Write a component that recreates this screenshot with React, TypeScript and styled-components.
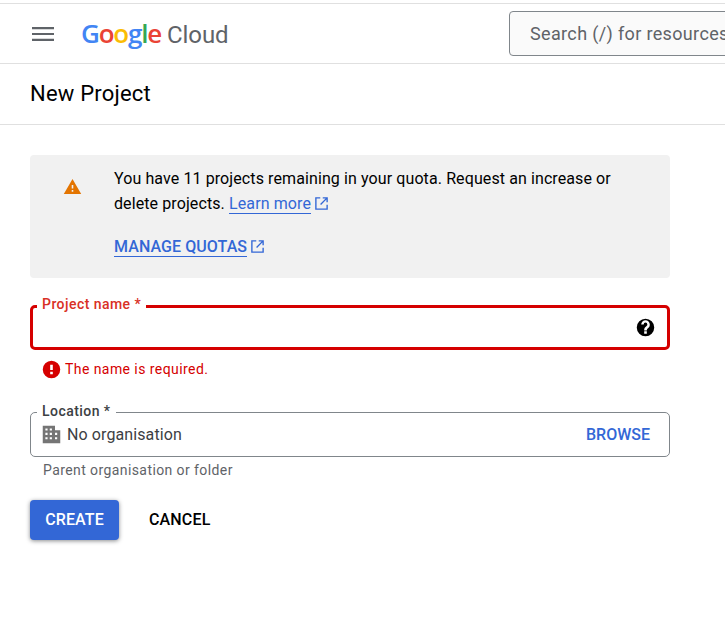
import React from 'react'
import styled, { createGlobalStyle } from 'styled-components'

const GlobalStyle = createGlobalStyle`
  html, body {
    margin: 0;
    padding: 0;
    background: #fff;
    overflow: hidden;
  }
  body {
    font-family: Roboto, "Liberation Sans", sans-serif;
    color: #202124;
  }
`

const BLUE = '#3367d6'
const RED = '#d50000'

const ExternalIcon: React.FC = () => (
  <StyledExternal viewBox="0 0 24 24" fill="none" stroke="currentColor" strokeWidth="2.2">
    <path d="M10 3H3v18h18v-7" />
    <path d="M14 3h7v7M21 3L10.5 13.5" />
  </StyledExternal>
)

const App: React.FC = () => {
  return (
    <>
      <GlobalStyle />
      <StyledPage>
        <StyledTopBar>
          <StyledMenu viewBox="0 0 24 24" fill="#5f6368">
            <path d="M1 5h22v2.2H1zM1 10.9h22v2.2H1zM1 16.8h22V19H1z" />
          </StyledMenu>
          <StyledLogo aria-label="Google Cloud">
            <StyledGoogle>
              <StyledLetter $color="#4285f4">G</StyledLetter>
              <StyledLetter $color="#ea4335">o</StyledLetter>
              <StyledLetter $color="#fbbc05">o</StyledLetter>
              <StyledLetter $color="#4285f4">g</StyledLetter>
              <StyledLetter $color="#34a853">l</StyledLetter>
              <StyledLetter $color="#ea4335">e</StyledLetter>
            </StyledGoogle>
            <StyledCloud>Cloud</StyledCloud>
          </StyledLogo>
          <StyledSearch>Search (/) for resources, docs, products and more</StyledSearch>
        </StyledTopBar>

        <StyledTitleBar>
          <StyledTitle>New Project</StyledTitle>
        </StyledTitleBar>

        <StyledContent>
          <StyledAlert>
            <StyledAlertIcon viewBox="0 0 24 24" fill="#e37400">
              <path d="M1 21.5h22L12 2.5 1 21.5zm12-3h-2v-2h2v2zm0-4h-2v-4.5h2V14.5z" />
            </StyledAlertIcon>
            <StyledAlertBody>
              <StyledAlertText>
                You have 11 projects remaining in your quota. Request an increase or delete projects.{' '}
                <StyledLink href="#">Learn more</StyledLink>
                <ExternalIcon />
              </StyledAlertText>
              <StyledQuotaRow>
                <StyledQuotaLink href="#">MANAGE QUOTAS</StyledQuotaLink>
                <ExternalIcon />
              </StyledQuotaRow>
            </StyledAlertBody>
          </StyledAlert>

          <StyledNameField>
            <StyledFieldLabel $error>Project name *</StyledFieldLabel>
            <StyledHelp viewBox="0 0 24 24" fill="#000">
              <path d="M12 2a10 10 0 1 0 0 20 10 10 0 0 0 0-20zm1.5 17h-3v-2.8h3V19zm2.5-7.4l-1.2 1.2c-.9.9-1.3 1.6-1.3 2.7h-3v-.6c0-1.4.6-2.5 1.5-3.4l1.5-1.5c.4-.4.6-.9.6-1.5a2.1 2.1 0 0 0-4.2 0H7.1a4.9 4.9 0 0 1 9.8 0c0 1.1-.2 2.3-.9 3.1z" />
            </StyledHelp>
          </StyledNameField>
          <StyledError>
            <StyledErrorIcon viewBox="0 0 24 24" fill={RED}>
              <path d="M12 2a10 10 0 1 0 0 20 10 10 0 0 0 0-20zm1.5 15.5h-3v-3h3v3zm0-5h-3v-6h3v6z" />
            </StyledErrorIcon>
            The name is required.
          </StyledError>

          <StyledLocationField>
            <StyledFieldLabel>Location *</StyledFieldLabel>
            <StyledBuilding viewBox="0 0 24 24" fill="#757575">
              <path d="M2 2h14v5h6v15H2V2zm3 3v2.5h2.5V5H5zm5 0v2.5h2.5V5H10zM5 10v2.5h2.5V10H5zm5 0v2.5h2.5V10H10zm6 0v2.5h2.5V10H16zM5 15v2.5h2.5V15H5zm5 0v2.5h2.5V15H10zm6 0v2.5h2.5V15H16z" fillRule="evenodd" />
            </StyledBuilding>
            <StyledLocationValue>No organisation</StyledLocationValue>
            <StyledBrowse>BROWSE</StyledBrowse>
          </StyledLocationField>
          <StyledHint>Parent organisation or folder</StyledHint>

          <StyledActions>
            <StyledCreate>CREATE</StyledCreate>
            <StyledCancel>CANCEL</StyledCancel>
          </StyledActions>
        </StyledContent>
      </StyledPage>
    </>
  )
}

const StyledPage = styled.div`
  width: 725px;
  height: 628px;
  overflow: hidden;
  padding-top: 3px;
  box-sizing: border-box;
`

const StyledTopBar = styled.header`
  display: flex;
  align-items: center;
  height: 61px;
  box-sizing: border-box;
  border-top: 1px solid #e0e0e0;
  border-bottom: 1px solid #e0e0e0;
  padding-left: 31px;
`

const StyledMenu = styled.svg`
  width: 24px;
  height: 24px;
  flex: none;
`

const StyledLogo = styled.div`
  display: flex;
  align-items: baseline;
  margin-left: 26px;
  width: 146px;
  flex: none;
  margin-top: -2px;
`

const StyledGoogle = styled.span`
  font-family: "Open Sans", sans-serif;
  font-size: 26px;
  letter-spacing: -1.2px;
  font-weight: 600;
`

const StyledLetter = styled.span<{ $color: string }>`
  color: ${props => props.$color};
`

const StyledCloud = styled.span`
  font-size: 24px;
  letter-spacing: -0.1px;
  color: #5f6368;
  margin-left: 6px;
`

const StyledSearch = styled.div`
  flex: none;
  margin-left: 282px;
  width: 400px;
  height: 45px;
  box-sizing: border-box;
  border: 1px solid #80868b;
  border-radius: 4px;
  background: #fafafa;
  color: #5f6368;
  font-size: 18px;
  letter-spacing: 0.35px;
  line-height: 43px;
  padding-left: 20px;
  white-space: nowrap;
  overflow: hidden;
`

const StyledTitleBar = styled.div`
  height: 61px;
  box-sizing: border-box;
  border-bottom: 1px solid #e0e0e0;
  padding: 0 0 2px 30px;
  display: flex;
  align-items: center;
`

const StyledTitle = styled.h1`
  margin: 0;
  font-size: 22px;
  font-weight: 400;
  letter-spacing: 0.2px;
  color: #000;
`

const StyledContent = styled.main`
  width: 640px;
  margin: 30px 0 0 30px;
`

const StyledAlert = styled.div`
  display: flex;
  height: 123px;
  box-sizing: border-box;
  background: #f1f1f1;
  border-radius: 4px;
  padding: 11px 48px 0 33px;
`

const StyledAlertIcon = styled.svg`
  width: 19px;
  height: 19px;
  flex: none;
  margin-top: 11px;
`

const StyledAlertBody = styled.div`
  margin-left: 32px;
`

const StyledAlertText = styled.div`
  font-size: 16px;
  line-height: 25px;
  letter-spacing: 0.1px;
  color: #000;
`

const StyledLink = styled.a`
  color: ${BLUE};
  text-decoration: none;
  border-bottom: 1px solid ${BLUE};
`

const StyledExternal = styled.svg`
  width: 15px;
  height: 15px;
  margin-left: 3px;
  color: ${BLUE};
  vertical-align: -1.5px;
`

const StyledQuotaRow = styled.div`
  margin-top: 18px;
  line-height: 25px;
  color: ${BLUE};
`

const StyledQuotaLink = styled.a`
  color: ${BLUE};
  font-size: 16px;
  font-weight: 500;
  letter-spacing: 0.08px;
  text-decoration: none;
  border-bottom: 1px solid ${BLUE};
`

const StyledNameField = styled.div`
  position: relative;
  height: 45px;
  box-sizing: border-box;
  margin-top: 27px;
  border: 3px solid ${RED};
  border-radius: 5px;
  display: flex;
  align-items: center;
  justify-content: flex-end;
  padding-right: 11px;
`

const StyledFieldLabel = styled.label<{ $error?: boolean }>`
  position: absolute;
  left: ${props => (props.$error ? '4px' : '6px')};
  top: ${props => (props.$error ? '-13px' : '-11px')};
  padding: 0 5px;
  background: #fff;
  font-size: 14px;
  line-height: 18px;
  font-weight: 500;
  letter-spacing: 0.45px;
  color: ${props => (props.$error ? '#d93025' : '#3c4043')};
`

const StyledHelp = styled.svg`
  width: 21px;
  height: 21px;
`

const StyledError = styled.div`
  display: flex;
  align-items: center;
  margin: 9px 0 0 11px;
  height: 20px;
  font-size: 14px;
  letter-spacing: 0.43px;
  color: ${RED};
`

const StyledErrorIcon = styled.svg`
  width: 21px;
  height: 21px;
  margin-right: 3px;
  flex: none;
`

const StyledLocationField = styled.div`
  position: relative;
  height: 45px;
  box-sizing: border-box;
  margin-top: 33px;
  border: 1px solid #80868b;
  border-radius: 5px;
  display: flex;
  align-items: center;
  padding: 0 19px 0 10px;
`

const StyledBuilding = styled.svg`
  width: 21px;
  height: 21px;
  flex: none;
`

const StyledLocationValue = styled.span`
  margin-left: 5px;
  flex: 1;
  font-size: 16px;
  letter-spacing: 0.1px;
  color: #3c4043;
`

const StyledBrowse = styled.span`
  font-size: 16px;
  font-weight: 500;
  color: ${BLUE};
`

const StyledHint = styled.div`
  margin: 5px 0 0 13px;
  font-size: 14px;
  line-height: 17px;
  letter-spacing: 0.41px;
  color: #5f6368;
`

const StyledActions = styled.div`
  display: flex;
  align-items: center;
  margin-top: 21px;
`

const StyledCreate = styled.button`
  width: 89px;
  height: 40px;
  border: 0;
  border-radius: 4px;
  background: ${BLUE};
  color: #fff;
  font: 500 16px Roboto, sans-serif;
  letter-spacing: 0.1px;
  box-shadow: 0 1px 4px rgba(60, 64, 67, 0.6);
  padding: 0 0 2px;
`

const StyledCancel = styled.button`
  margin-left: 30px;
  padding: 0 0 2px;
  border: 0;
  background: none;
  color: #000;
  font: 500 16px Roboto, sans-serif;
  letter-spacing: 0.15px;
`

export default App
